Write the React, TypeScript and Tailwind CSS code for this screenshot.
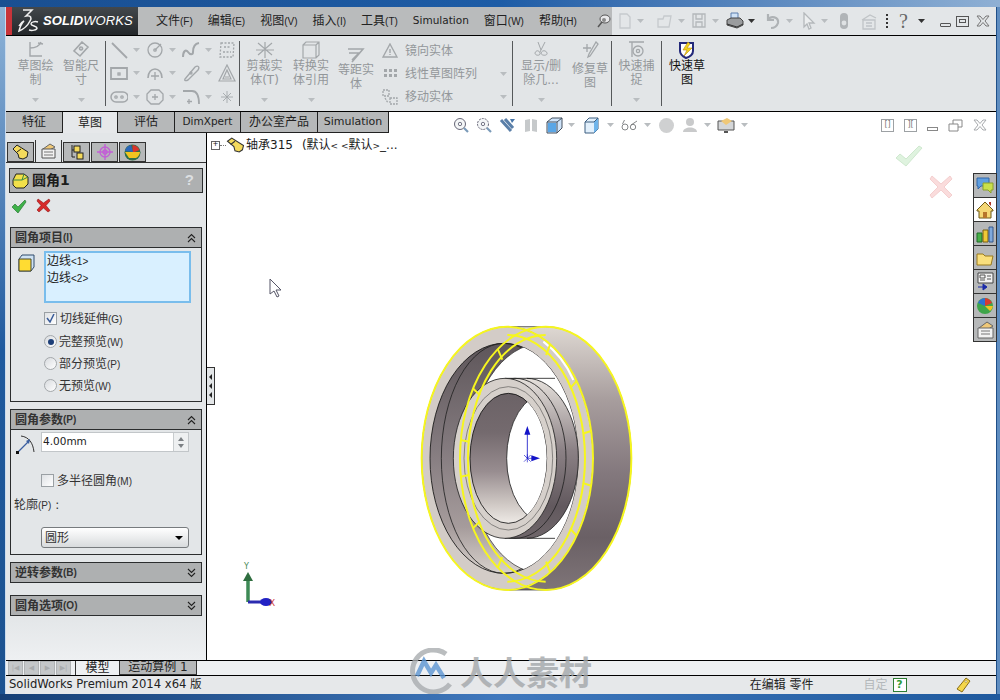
import type { ReactNode } from "react";

const UI = "font-['DejaVu_Sans','Noto_Sans_CJK_SC',sans-serif]";
const G = "#a3a7aa";

function Caret({ dark }: { dark?: boolean }) {
  return (
    <svg width="7" height="4" viewBox="0 0 7 4" className="shrink-0">
      <path d="M0 0h7L3.5 4z" fill={dark ? "#333" : "#b9bdc0"} />
    </svg>
  );
}

function Ico({ children, w = 18, h = 18 }: { children: ReactNode; w?: number; h?: number }) {
  return (
    <svg width={w} height={h} viewBox={`0 0 ${w} ${h}`} fill="none" stroke={G} strokeWidth="1.3" className="shrink-0">
      {children}
    </svg>
  );
}

// menu label: chinese text followed by a narrow shortcut
function Menu({ t, k }: { t: string; k: string }) {
  return (
    <span className="text-[12px] text-[#222] whitespace-nowrap">
      {t}
      <span className="text-[10px] font-['Liberation_Sans',sans-serif]">({k})</span>
    </span>
  );
}

function Logo() {
  return (
    <div className="w-[132px] h-full flex items-center bg-gradient-to-b from-[#43484c] to-[#23272a]">
      <div className="w-[6px] h-full bg-[#c8343a]" />
      <svg width="24" height="26" viewBox="0 0 24 26" className="ml-[4px]" fill="none" stroke="#f0f0f0" strokeWidth="1.5">
        <path d="M7 2h9l-6 6c5-1 6 2 4 5-2 4-6 8-11 10 1-4 3-8 5-10-2 1-4 3-5 5" />
        <path d="M22 14c-3-1-7 0-7 2s6 2 6 4-5 3-8 2" />
      </svg>
      <span className="ml-[3px] text-[13px] italic text-white tracking-[0.1px] font-['Liberation_Sans',sans-serif]">
        <b>SOLID</b>WORKS
      </span>
    </div>
  );
}

function TitleRow() {
  return (
    <div className="h-[29px] flex border-b border-black shrink-0">
      <Logo />
      <div className="w-[474px] h-full flex items-center bg-[#b9bbbc] pl-[18px] gap-[15px]">
        <Menu t="文件" k="F" />
        <Menu t="编辑" k="E" />
        <Menu t="视图" k="V" />
        <Menu t="插入" k="I" />
        <Menu t="工具" k="T" />
        <span className="text-[10.5px] text-[#222]">Simulation</span>
        <Menu t="窗口" k="W" />
        <Menu t="帮助" k="H" />
        <svg width="16" height="16" viewBox="0 0 16 16" className="ml-[3px] shrink-0">
          <path d="M3 14l4-5" stroke="#555" strokeWidth="1.5" />
          <ellipse cx="10" cy="6" rx="5" ry="4" fill="#e8e8ea" stroke="#555" />
          <circle cx="9" cy="7" r="2" fill="#888" />
        </svg>
      </div>
      <div className="flex-1 h-full flex items-center bg-[#e3e6e8] pl-[5px]">
        <Ico w={16}><path d="M3 2h7l3 3v11H3z" stroke="#c6cacd" /></Ico>
        <span className="ml-[4px] mr-[12px]"><Caret /></span>
        <Ico w={18}><path d="M2 7h5l1-3h7l-2 11H2z" stroke="#c6cacd" /></Ico>
        <span className="ml-[4px] mr-[6px]"><Caret /></span>
        <Ico w={16}><path d="M2 2h12v13H2zM5 2v5h6V2M5 15v-5h6v5" stroke="#b4b8bb" /></Ico>
        <span className="ml-[5px] mr-[7px]"><Caret /></span>
        <svg width="18" height="18" viewBox="0 0 18 18" className="shrink-0">
          <path d="M5 1h7v6H5z" fill="#cfe2f7" stroke="#5c7fae" />
          <path d="M1 8l4-2h9l3 3v4l-6 3-10-3z" fill="#9a9c9e" stroke="#444" />
          <path d="M1 12l10 3 6-3" stroke="#333" fill="none" />
        </svg>
        <span className="ml-[4px] mr-[8px]"><Caret dark /></span>
        <Ico w={18}><path d="M5 2v6h6M5 8c3-5 11-3 10 3-1 3-4 5-7 5" stroke="#aeb2b5" strokeWidth="2.2" /></Ico>
        <span className="ml-[5px] mr-[9px]"><Caret /></span>
        <Ico w={14}><path d="M2 1l10 10H7l2 5-2 1-2-5-3 3z" stroke="#b4b8bb" fill="#eceeef" /></Ico>
        <span className="ml-[5px] mr-[11px]"><Caret /></span>
        <svg width="10" height="18" viewBox="0 0 10 18" className="shrink-0">
          <rect x="1" y="1" width="8" height="16" rx="4" fill="#b0b4b7" />
          <circle cx="5" cy="11" r="2.4" fill="#dfe2e4" />
        </svg>
        <span className="w-[11px] shrink-0" />
        <Ico w={18}>
          <path d="M2 8l8-5 6 3M3 8h12v9H3zM6 11h6M6 14h6" stroke="#c0c4c7" />
        </Ico>
        <span className="ml-[8px] mr-[11px] flex flex-col gap-[2px] shrink-0">
          <i className="block w-[2px] h-[2px] bg-[#333]" />
          <i className="block w-[2px] h-[2px] bg-[#333]" />
          <i className="block w-[2px] h-[2px] bg-[#333]" />
          <i className="block w-[2px] h-[2px] bg-[#333]" />
        </span>
        <span className="text-[20px] leading-none text-[#666] w-[14px] shrink-0 font-['Liberation_Serif',serif]">?</span>
        <span className="ml-[5px] mr-[15px]"><Caret dark /></span>
        <span className="w-[11px] h-[4px] mt-[8px] border border-[#555] rounded-[1px] shrink-0" />
        <span className="w-[13px] h-[11px] ml-[5px] border border-[#555] flex items-center justify-center shrink-0">
          <span className="block w-[7px] h-[4px] border border-[#555]" />
        </span>
        <svg width="14" height="12" viewBox="0 0 14 12" className="ml-[7px] shrink-0" fill="none" stroke="#777">
          <path d="M1 1h3l3 3.5L10 1h3L9 6l4 5h-3L7 7.5 4 11H1l4-5z" />
        </svg>
      </div>
    </div>
  );
}

function BigBtn({
  lines,
  icon,
  w,
  on,
  arrow = true,
  pad = 0,
}: {
  lines: string[];
  icon: ReactNode;
  w: number;
  on?: boolean;
  arrow?: boolean;
  pad?: number;
}) {
  return (
    <div className="h-full flex flex-col items-center pt-[5px] shrink-0" style={{ width: w }}>
      <div className="h-[18px] flex items-center justify-center">{icon}</div>
      <div
        className={`text-[12px] leading-[14px] text-center ${on ? "text-[#111]" : "text-[#93979a]"}`}
        style={{ marginTop: pad }}
      >
        {lines.map((l) => (
          <div key={l} className="whitespace-nowrap">{l}</div>
        ))}
      </div>
      {arrow && <div className="mt-auto mb-[9px]"><Caret /></div>}
    </div>
  );
}

function Sep() {
  return <div className="w-px h-[65px] bg-[#55585a] shrink-0 self-center" />;
}

function ToolGrid() {
  const cells: ReactNode[] = [
    <path d="M2 2l15 15" strokeWidth="1.8" />,
    <><circle cx="9" cy="9" r="7" /><circle cx="9" cy="9" r="1.2" /><path d="M9 9l6-6" /></>,
    <path d="M1 16c0-6 3-8 5-5s5 3 5 0 0-8 6-9" strokeWidth="2" />,
    <path d="M3 2h13l-1 14H2zM6 6h7M5 11h8" strokeDasharray="2 1.5" />,
    <><path d="M1 4h16v11H1z" strokeWidth="1.8" /><rect x="8" y="9" width="2" height="2" /></>,
    <><path d="M2 14c0-12 14-12 14 0" strokeWidth="1.6" /><path d="M9 8v8M5 12h8" /></>,
    <><path d="M3 15L13 3c3-2 5 0 3 3L6 16c-2 1-4 1-3-1z" strokeWidth="1.4" /><circle cx="9" cy="9" r="1" /></>,
    <path d="M9 1l8 16H1zM9 6l4 9H5zM7 13h4" strokeWidth="1.2" />,
    <><rect x="1" y="4" width="17" height="10" rx="5" strokeWidth="1.5" /><circle cx="6" cy="9" r="1.2" /><circle cx="12" cy="9" r="1.2" /></>,
    <><path d="M5 2h8l4 4v6l-4 4H5l-4-4V6z" strokeWidth="1.3" /><path d="M9 6v6M6 9h6" /></>,
    <><path d="M1 3h9c5 0 7 4 7 13" strokeWidth="1.8" /><path d="M7 11v5M5 13.500h5" /></>,
    <path d="M9 3v12M3 9h12M5 5l8 8M13 5l-8 8" strokeWidth=".9" />,
  ];
  return (
    <div className="w-[133px] h-full grid grid-cols-[36px_36px_36px_18px] grid-rows-3 pl-[4px] py-[2px] shrink-0">
      {cells.map((c, i) => (
        <div key={i} className="flex items-center gap-[5px]">
          <Ico w={18}>{c}</Ico>
          {(i + 1) % 4 !== 0 && <Caret />}
        </div>
      ))}
    </div>
  );
}

function Ribbon() {
  const rows: [string, ReactNode, boolean][] = [
    ["镜向实体", <path d="M8 1l7 13H1zM8 6v4M8 11v1" strokeWidth="1.4" />, false],
    [
      "线性草图阵列",
      <path d="M2 3h3v3H2zM7 3h3v3H7zM12 3h3v3h-3zM2 8h3v3H2zM7 8h3v3H7zM12 8h3v3h-3z" fill={G} stroke="none" />,
      true,
    ],
    ["移动实体", <path d="M1 1h6v6H1zM8 9h7v6H8zM3 9l3 5" strokeDasharray="2 1" />, true],
  ];
  return (
    <div className="h-[76px] flex items-stretch bg-[#e2e5e7] border-b border-black shrink-0">
      <div className="w-[8px] shrink-0" />
      <BigBtn
        w={43}
        lines={["草图绘", "制"]}
        icon={<Ico w={22}><path d="M5 1v14h12M5 7c4 0 9-1 11-6M13 2l5 1" strokeWidth="1.4" /></Ico>}
      />
      <BigBtn
        w={48}
        lines={["智能尺", "寸"]}
        icon={<Ico w={18}><path d="M10 1l6 5-8 9-6-5zM9 6a1.500 1.500 0 1 0 .1 0" strokeWidth="1.6" /></Ico>}
      />
      <Sep />
      <ToolGrid />
      <Sep />
      <BigBtn
        w={49}
        lines={["剪裁实", "体(T)"]}
        icon={<Ico w={20}><path d="M3 2l7 6 7-6M3 14l7-6 7 6M1 9h18M10 1v16" strokeWidth="1.2" /></Ico>}
      />
      <BigBtn
        w={44}
        lines={["转换实", "体引用"]}
        icon={<Ico w={18}><path d="M1 4l3-3h13v13l-3 3H1zM4 4h10v13M14 4l3-3M4 4L1 4" strokeWidth="1.2" /></Ico>}
      />
      <BigBtn
        w={46}
        pad={4}
        arrow={false}
        lines={["等距实", "体"]}
        icon={<span className="mt-[8px]"><Ico w={20}><path d="M2 4h15L6 17M3 8h10L6 15" strokeWidth="1.6" /></Ico></span>}
      />
      <div className="w-[133px] h-full flex flex-col justify-between py-[4px] pl-[3px] shrink-0">
        {rows.map(([t, ic, arrow]) => (
          <div key={t} className="h-[21px] flex items-center">
            <Ico w={16} h={16}>{ic}</Ico>
            <span className="ml-[7px] text-[12px] text-[#93979a] whitespace-nowrap">{t}</span>
            {arrow && <span className="ml-auto mr-[5px]"><Caret /></span>}
          </div>
        ))}
      </div>
      <Sep />
      <BigBtn
        w={56}
        lines={["显示/删", "除几..."]}
        icon={<Ico w={16}><path d="M5 1l3 8M12 1L7 11M2 12c1-3 4-3 5 0s-5 3-5 0zM8 12c1-3 5-3 6 0s-6 3-6 0z" strokeWidth="1" /></Ico>}
      />
      <BigBtn
        w={42}
        arrow={false}
        pad={3}
        lines={["修复草", "图"]}
        icon={<Ico w={18}><path d="M2 7h8M6 3v8M15 1l2 2-8 12-2 1 1-3z" strokeWidth="1.3" /></Ico>}
      />
      <Sep />
      <BigBtn
        w={49}
        lines={["快速捕", "捉"]}
        icon={<Ico w={18}><path d="M1 1h15M4 1v15" /><circle cx="10" cy="10" r="5" /><circle cx="10" cy="10" r="1.600" /></Ico>}
      />
      <Sep />
      <BigBtn
        w={50}
        on
        arrow={false}
        lines={["快速草", "图"]}
        icon={
          <svg width="18" height="18" viewBox="0 0 18 18">
            <path d="M2 2v8c0 4 4 6 6 7 3-1 7-3 7-7V2z" fill="#fff" stroke="#23297a" strokeWidth="2" />
            <path d="M10 1L5 9h4l-3 6 8-8H9l3-4z" fill="#f2d21e" stroke="#b58a10" strokeWidth=".6" />
          </svg>
        }
      />
    </div>
  );
}

function Tab({ t, active, w, small }: { t: string; active?: boolean; w: number; small?: string }) {
  return (
    <div
      className={`h-full flex items-center justify-center text-[12px] text-[#222] border-r border-[#222] shrink-0 ${
        active ? "bg-[#e6e8ea] h-[23px] self-start" : "bg-[#b6b8b9] border-b"
      }`}
      style={{ width: w }}
    >
      <span className={small}>{t}</span>
    </div>
  );
}

function Mag({ dash }: { dash?: boolean }) {
  return (
    <svg width="16" height="17" viewBox="0 0 16 17" fill="none" className="shrink-0">
      <circle cx="7" cy="7" r="5.500" fill="#f4f6f7" stroke="#667" strokeDasharray={dash ? "2 1" : undefined} />
      <circle cx="7" cy="7" r="1.700" stroke="#778" />
      <path d="M11 11l4 4" stroke="#7a9ab8" strokeWidth="2.200" />
    </svg>
  );
}

function ViewBar() {
  return (
    <div className="flex-1 flex items-center pl-[64px] pt-[5px] bg-white">
      <Mag />
      <span className="w-[7px]" />
      <Mag dash />
      <span className="w-[7px]" />
      <svg width="17" height="17" viewBox="0 0 17 17"><path d="M2 3l10 11M6 2l8 9" stroke="#5a7fa8" strokeWidth="3" /><path d="M11 2h5l-3 4" fill="#4775a8" /></svg>
      <span className="w-[7px]" />
      <svg width="16" height="16" viewBox="0 0 16 16"><path d="M2 3l5-1v12l-5 1zM9 2l5 1v12l-5-1z" fill="#c6c9cb" /></svg>
      <span className="w-[7px]" />
      <svg width="17" height="17" viewBox="0 0 17 17">
        <path d="M1 5l5-4h10v10l-5 5H1z" fill="#cfe4fa" stroke="#44515e" />
        <path d="M1 5h10v11M11 5l5-4" stroke="#44515e" fill="none" />
        <path d="M2 6h8v9H2z" fill="#5aa6e6" />
      </svg>
      <span className="w-[5px]" />
      <Caret />
      <span className="w-[9px]" />
      <svg width="16" height="17" viewBox="0 0 16 17">
        <path d="M1 5l4-4h9v11l-4 4H1z" fill="#e2f0fc" stroke="#3d5e80" />
        <path d="M10 5v11L14 12V1z" fill="#6fb4ea" />
        <path d="M1 5h9l4-4" stroke="#3d5e80" fill="none" />
      </svg>
      <span className="w-[7px]" />
      <Caret />
      <span className="w-[6px]" />
      <svg width="19" height="12" viewBox="0 0 19 12" fill="none" stroke="#77797c" strokeWidth=".9">
        <circle cx="5" cy="8" r="3" /><circle cx="13" cy="8" r="2.700" /><path d="M2.500 5l2-4M11 6l6-4" />
      </svg>
      <span className="w-[5px]" />
      <Caret />
      <span className="w-[8px]" />
      <span className="w-[15px] h-[15px] rounded-full bg-[#cfd0d1]" />
      <span className="w-[8px]" />
      <svg width="16" height="16" viewBox="0 0 16 16"><circle cx="8" cy="5" r="4" fill="#c9cacb" /><path d="M1 15c0-6 14-6 14 0z" fill="#c9cacb" /></svg>
      <span className="w-[6px]" />
      <Caret />
      <span className="w-[6px]" />
      <svg width="18" height="18" viewBox="0 0 18 18">
        <path d="M1 5h16v9H1z" fill="#d4d6d8" stroke="#555" />
        <path d="M4 5l6-3 5 3-6 4z" fill="#efc878" />
        <path d="M7 16h4" stroke="#555" strokeWidth="2" />
      </svg>
      <span className="w-[6px]" />
      <Caret />
      <div className="ml-auto flex items-center pr-[9px] gap-[10px]">
        <span className="w-[13px] h-[13px] border border-[#9da1a4] flex items-center justify-center text-[8px] leading-none text-[#777]">[]</span>
        <span className="w-[13px] h-[13px] border border-[#9da1a4] flex items-center justify-center text-[8px] leading-none text-[#777]">][</span>
        <span className="w-[11px] h-[4px] mt-[7px] border border-[#888]" />
        <svg width="15" height="13" viewBox="0 0 15 13" fill="#fff" stroke="#888"><path d="M5 1h9v7H5z" /><path d="M1 5h9v7H1z" /></svg>
        <svg width="14" height="12" viewBox="0 0 14 12" fill="none" stroke="#a7aaad"><path d="M1 1h3l3 3.5L10 1h3L9 6l4 5h-3L7 7.5 4 11H1l4-5z" /></svg>
      </div>
    </div>
  );
}

function PanelTab({ active, children }: { active?: boolean; children: ReactNode }) {
  return (
    <div
      className={`w-[27px] flex items-center justify-center border border-[#333] shrink-0 ${
        active ? "h-[22px] bg-[#e3e6e8] border-b-0 border-t-0" : "h-[20px] bg-[#b6b8b9]"
      }`}
    >
      {children}
    </div>
  );
}

function Section({ title, k, open, children }: { title: string; k: string; open?: boolean; children?: ReactNode }) {
  return (
    <div className="mx-[4px] border border-[#2b2d2e]">
      <div className="h-[19px] flex items-center bg-[#aeb0b1] pl-[4px] pr-[4px] text-[12px] font-bold text-[#333]">
        {title}
        <span className="text-[10px] font-['Liberation_Sans',sans-serif]">({k})</span>
        <svg width="9" height="10" viewBox="0 0 9 10" className="ml-auto mr-[1px]" fill="none" stroke="#222" strokeWidth="1.1">
          {open ? <path d="M1 5l3.500-3.500L8 5M1 9l3.500-3.500L8 9" /> : <path d="M1 1l3.500 3.500L8 1M1 5l3.500 3.500L8 5" />}
        </svg>
      </div>
      {children && <div className="border-t border-[#2b2d2e]">{children}</div>}
    </div>
  );
}

function Check({ on }: { on?: boolean }) {
  return (
    <span className="w-[13px] h-[13px] border border-[#9aa0a4] bg-gradient-to-br from-[#dfe2e5] to-white flex items-center justify-center shrink-0">
      {on && (
        <svg width="9" height="9" viewBox="0 0 9 9" fill="none" stroke="#3a5d9a" strokeWidth="1.500"><path d="M1 4l3 4 4-8" /></svg>
      )}
    </span>
  );
}

function Radio({ t, k, on }: { t: string; k: string; on?: boolean }) {
  return (
    <div className="flex items-center">
      <span className="w-[13px] h-[13px] rounded-full border border-[#a4a8ab] bg-gradient-to-br from-[#d8dbde] to-white flex items-center justify-center shrink-0">
        {on && <span className="w-[6px] h-[6px] rounded-full bg-[#1d3f78]" />}
      </span>
      <span className="ml-[2px] text-[12px] leading-none text-[#333]">
        {t}
        <span className="text-[10px] font-['Liberation_Sans',sans-serif]">({k})</span>
      </span>
    </div>
  );
}

function Panel() {
  return (
    <div className="w-[201px] shrink-0 bg-[#e3e6e8] border-r border-black flex flex-col">
      <div className="h-[30px] flex items-end pl-px border-b border-[#333] gap-px shrink-0">
        <PanelTab>
          <svg width="17" height="16" viewBox="0 0 17 16"><path d="M1 5l4-4 11 7-1 5-4 2-4-1-1-4z" fill="#f4da5c" stroke="#222" /><path d="M5 8l4-3" stroke="#222" /></svg>
        </PanelTab>
        <PanelTab active>
          <svg width="17" height="16" viewBox="0 0 17 16"><path d="M3 6l7-5 5 3-7 4z" fill="#efc878" stroke="#666" /><path d="M2 6h13v9H2z" fill="#f2f2f2" stroke="#555" /><path d="M4 9h9M4 12h9" stroke="#777" /></svg>
        </PanelTab>
        <PanelTab>
          <svg width="17" height="16" viewBox="0 0 17 16"><path d="M4 1v12h3M4 6h3" stroke="#222" fill="none" /><rect x="6" y="2" width="6" height="6" fill="#f4da5c" stroke="#222" /><rect x="9" y="9" width="6" height="6" fill="#f4da5c" stroke="#222" /></svg>
        </PanelTab>
        <PanelTab>
          <svg width="16" height="16" viewBox="0 0 16 16" fill="none" stroke="#c25fd6" strokeWidth="1.400"><circle cx="8" cy="8" r="5" /><circle cx="8" cy="8" r="2" /><path d="M8 0v16M0 8h16" /></svg>
        </PanelTab>
        <PanelTab>
          <svg width="17" height="17" viewBox="0 0 17 17"><circle cx="8.500" cy="8.500" r="8" fill="#2f6f4b" /><path d="M8.500 1a8 8 0 0 1 7 5L8.500 9z" fill="#d8342c" /><path d="M1 8h15a8 8 0 0 1-4 6H5z" fill="#f0c420" /><path d="M1 7a8 8 0 0 1 6-6l2 7z" fill="#2a66b8" /></svg>
        </PanelTab>
      </div>

      <div className="mx-[3px] mt-[5px] h-[25px] bg-[#aeb0b1] border border-[#2b2d2e] flex items-center pl-[2px] pr-[8px]">
        <svg width="17" height="17" viewBox="0 0 17 17"><path d="M1 8l3-6h8l4 3v7l-4 4H4l-3-3z" fill="#f2e04a" stroke="#222" /><path d="M1 8h9l2-6M10 8l6-3" stroke="#3c8a44" fill="none" /></svg>
        <span className="ml-[3px] text-[14px] font-bold text-[#1c1c1c]">圆角1</span>
        <span className="ml-auto text-[15px] font-bold text-[#dcdfe1] font-['Liberation_Sans',sans-serif]">?</span>
      </div>

      <div className="flex items-center h-[17px] mt-[4px] pl-[5px] gap-[9px]">
        <svg width="16" height="16" viewBox="0 0 16 16"><path d="M1 9l3-3 3 3 7-7 1 2-8 11z" fill="#3fb24a" stroke="#1c6a27" strokeWidth=".6" /></svg>
        <svg width="15" height="15" viewBox="0 0 15 15"><path d="M2 1l5.500 4L13 1l1 2-4 4.500 4 5-2 1.500-4.500-4L3 14l-2-2 4-4.500L1 3z" fill="#d72a2a" stroke="#8d1414" strokeWidth=".6" /></svg>
      </div>

      <div className="mt-[13px]">
        <Section title="圆角项目" k="I" open>
          <div className="h-[153px] relative pl-[33px] pt-[3px]">
            <div className="w-[147px] h-[52px] border-2 border-[#79bdec] bg-[#d9f0ff] pl-px text-[12px] leading-[16px] text-[#222]">
              边线<span className="text-[10px] font-['Liberation_Sans',sans-serif]">&lt;1&gt;</span>
              <br />
              边线<span className="text-[10px] font-['Liberation_Sans',sans-serif]">&lt;2&gt;</span>
            </div>
            <svg width="17" height="18" viewBox="0 0 17 18" className="absolute left-[7px] top-[6px]">
              <path d="M1 5l3-4h12v12l-3 4H1z" fill="#cfe2f3" stroke="#2f4a6b" />
              <path d="M1 5h12v12H1z" fill="#ffdc32" stroke="#4a4a2a" />
            </svg>
            <div className="flex items-center mt-[8px] h-[15px]">
              <Check on />
              <span className="ml-[3px] text-[12px] text-[#333]">
                切线延伸<span className="text-[10px] font-['Liberation_Sans',sans-serif]">(G)</span>
              </span>
            </div>
            <div className="mt-[9px] flex flex-col gap-[9px]">
              <Radio t="完整预览" k="W" on />
              <Radio t="部分预览" k="P" />
              <Radio t="无预览" k="W" />
            </div>
          </div>
        </Section>
      </div>

      <div className="mt-[7px]">
        <Section title="圆角参数" k="P" open>
          <div className="h-[124px] relative pt-[2px] pl-[30px]">
            <svg width="20" height="20" viewBox="0 0 20 20" className="absolute left-[5px] top-[5px]" fill="none">
              <path d="M5 1c8 1 12 7 13 16" stroke="#333" />
              <path d="M2 17L13 6" stroke="#3a5fa0" strokeWidth="1.300" />
              <path d="M14 4l-1 5-3-3z" fill="#3a5fa0" />
              <rect x="0" y="16" width="3" height="3" fill="#111" />
            </svg>
            <div className="w-[148px] h-[20px] bg-white border border-[#c2c6c9] flex items-center">
              <span className="pl-px text-[10.5px] text-[#222]">4.00mm</span>
              <div className="ml-auto w-[15px] h-full border-l border-[#c8ccce] flex flex-col items-center justify-around py-[2px] bg-[#eef0f1]">
                <span className="w-0 h-0 border-x-[3px] border-x-transparent border-b-[4px] border-b-[#7c8084]" />
                <span className="w-0 h-0 border-x-[3px] border-x-transparent border-t-[4px] border-t-[#7c8084]" />
              </div>
            </div>
            <div className="flex items-center mt-[21px] h-[15px]">
              <Check />
              <span className="ml-[3px] text-[12px] text-[#333]">
                多半径圆角<span className="text-[10px] font-['Liberation_Sans',sans-serif]">(M)</span>
              </span>
            </div>
            <div className="absolute left-[3px] top-[69px] text-[12px] leading-none text-[#333]">
              轮廓<span className="text-[10px] font-['Liberation_Sans',sans-serif]">(P)</span> :
            </div>
            <div className="absolute left-[30px] top-[97px] w-[148px] h-[21px] rounded-[3px] border border-[#777b7e] bg-gradient-to-b from-white to-[#d8dbdd] flex items-center pl-[3px] pr-[5px] text-[12px] text-[#333]">
              圆形
              <span className="ml-auto w-0 h-0 border-x-[4px] border-x-transparent border-t-[4px] border-t-black" />
            </div>
          </div>
        </Section>
      </div>

      <div className="mt-[7px]"><Section title="逆转参数" k="B" /></div>
      <div className="mt-[12px]"><Section title="圆角选项" k="O" /></div>
      <div className="flex-1 bg-gradient-to-b from-[#e3e6e8] to-[#eef0f2]" />
    </div>
  );
}

function Bearing() {
  // viewBox is 3x the screen size so the coordinates come straight from the zoomed reference
  const a = { cx: 322, cy: 445, rx: 257, ry: 395 };
  const b = { cx: 437, cy: 445, rx: 257, ry: 395 };
  const ticks = (c: typeof a, ang: number[]) =>
    ang.map((d) => {
      const t = (d * Math.PI) / 180;
      const k = 0.905;
      return (
        <line
          key={`${c.cx}-${d}`}
          x1={c.cx + c.rx * Math.cos(t)}
          y1={c.cy + c.ry * Math.sin(t)}
          x2={c.cx + c.rx * k * Math.cos(t)}
          y2={c.cy + c.ry * k * Math.sin(t)}
          stroke="#f6f61e"
          strokeWidth="6"
        />
      );
    });
  return (
    <svg width="250" height="290" viewBox="0 0 750 870">
      <defs>
        <linearGradient id="band" x1="0" y1="0" x2="0" y2="1">
          <stop offset="0" stopColor="#ded8d2" />
          <stop offset="0.28" stopColor="#a79d9d" />
          <stop offset="0.55" stopColor="#84797e" />
          <stop offset="0.8" stopColor="#6a6065" />
          <stop offset="1" stopColor="#7f7578" />
        </linearGradient>
        <linearGradient id="bore" x1="0" y1="0" x2="0" y2="1">
          <stop offset="0" stopColor="#6b6266" />
          <stop offset="0.3" stopColor="#746a6e" />
          <stop offset="0.6" stopColor="#988d90" />
          <stop offset="0.85" stopColor="#cfc8c4" />
          <stop offset="1" stopColor="#eeeae6" />
        </linearGradient>
        <linearGradient id="wall" x1="0" y1="0" x2="0" y2="1">
          <stop offset="0" stopColor="#5e565a" />
          <stop offset="0.45" stopColor="#837a7e" />
          <stop offset="0.8" stopColor="#a69c9c" />
          <stop offset="1" stopColor="#d8d2cc" />
        </linearGradient>
        <linearGradient id="hub" x1="0" y1="0" x2="0" y2="1">
          <stop offset="0" stopColor="#e6e1dc" />
          <stop offset="0.45" stopColor="#8b8185" />
          <stop offset="0.8" stopColor="#62595e" />
          <stop offset="1" stopColor="#6f666a" />
        </linearGradient>
        <clipPath id="holeC"><ellipse cx="312" cy="445" rx="222" ry="345" /></clipPath>
        <clipPath id="boreC"><ellipse cx="325" cy="445" rx="115" ry="195" /></clipPath>
      </defs>

      {/* outer cylinder */}
      <path d={`M${a.cx} 50H${b.cx}A257 395 0 0 1 ${b.cx} 840H${a.cx}z`} fill="url(#band)" stroke="#222" strokeWidth="2" />
      {/* front face */}
      <ellipse {...a} fill="#d3ccc7" stroke="#222" strokeWidth="2" />
      {/* bore of the outer ring */}
      <ellipse cx="312" cy="445" rx="222" ry="345" fill="url(#wall)" stroke="#111" strokeWidth="2.500" />
      <ellipse cx="312" cy="445" rx="188" ry="345" fill="none" stroke="#222" strokeWidth="2.500" />
      <g clipPath="url(#holeC)">
        <ellipse cx="427" cy="445" rx="222" ry="345" fill="#fff" stroke="#222" strokeWidth="2" />
      </g>
      {/* inner ring */}
      <path d="M315 205H380A155 240 0 0 1 380 685H315z" fill="url(#hub)" stroke="#222" strokeWidth="2.500" />
      <ellipse cx="345" cy="445" rx="153" ry="240" fill="none" stroke="#222" strokeWidth="2.500" />
      <path d="M380 205H465M380 685H465" stroke="#222" strokeWidth="2.500" />
      <ellipse cx="315" cy="445" rx="155" ry="240" fill="#d6d0cb" stroke="#222" strokeWidth="2.500" />
      <ellipse cx="325" cy="445" rx="115" ry="195" fill="url(#bore)" stroke="#111" strokeWidth="2.500" />
      <ellipse cx="325" cy="445" rx="133" ry="215" fill="none" stroke="#333" strokeWidth="1.500" />
      <g clipPath="url(#boreC)">
        <ellipse cx="440" cy="445" rx="120" ry="195" fill="#fff" stroke="#222" strokeWidth="2.500" />
      </g>

      {/* selected edges */}
      <g fill="none" stroke="#f6f61e" strokeWidth="6">
        <ellipse {...a} />
        <ellipse {...b} />
        <path d="M322 75A233 370 0 0 1 322 815" />
        <path d="M437 75A233 370 0 0 0 437 815" />
      </g>
      <path d="M430 95Q490 140 520 210" fill="none" stroke="#fff" strokeWidth="6" />
      {ticks(a, [-60, -36, -12, 12, 36, 60])}
      {ticks(b, [236, 212, 188, 172, 148, 124])}

      {/* origin */}
      <path d="M382 445V370" stroke="#1414c8" strokeWidth="2.500" />
      <path d="M382 348l9 26h-18zM420 445l-26-9v18z" fill="#1414c8" />
      <path d="M382 445h20M372 435l20 20M392 435l-20 20M382 433v24" stroke="#1414c8" strokeWidth="2" />
    </svg>
  );
}

function TaskPane() {
  const tabs: ReactNode[] = [
    <><path d="M1 2h12v8H5l-3 3v-3H1z" fill="#5f9fe0" stroke="#3366a8" /><path d="M7 7h10v7h-2v3l-3-3H7z" fill="#c9e04a" stroke="#8ba02a" /></>,
    <><path d="M1 10L9 2l8 8v1h-2v7H3v-7H1z" fill="#f5d774" stroke="#6e5a18" /><path d="M7 18v-6h4v6z" fill="#b7752a" /><path d="M13 2h2v4l-2-2z" fill="#b03a2a" /></>,
    <><path d="M1 9h5v9H1z" fill="#48b048" stroke="#1f6a27" /><path d="M7 6h5v12H7z" fill="#efc838" stroke="#7a5f10" /><path d="M13 3h4v15h-4z" fill="#7fa9dc" stroke="#34568a" /></>,
    <path d="M1 6h6l2 2h8l-2 9H1z" fill="#f9df7d" stroke="#9a7a1e" />,
    <><path d="M2 1h15v10H2z" fill="#f2f2f2" stroke="#444" /><path d="M4 3h5v3H4zM11 4h4M11 7h4M4 8h5" stroke="#555" fill="none" /><path d="M2 15h8M7 12l4 3-4 3z" stroke="#1a2aa8" fill="#1a2aa8" /></>,
    <><circle cx="9" cy="10" r="8" fill="#3fa54a" /><path d="M9 2a8 8 0 0 1 7 5L9 10z" fill="#d83a30" /><path d="M9 2a8 8 0 0 0-7 5l7 3z" fill="#2f6fd0" /><path d="M1 10h16a8 8 0 0 1-3 5L9 10z" fill="#f0c420" /></>,
    <><path d="M3 8l8-6 6 4-6 4z" fill="#efc878" stroke="#666" /><path d="M2 8h15v10H2z" fill="#f2f2f2" stroke="#666" /><path d="M5 11h9M5 14h9" stroke="#777" /></>,
  ];
  return (
    <div className="absolute right-[-1px] top-[40px] flex flex-col z-10">
      {tabs.map((t, i) => (
        <div
          key={i}
          className={`w-[24px] h-[25px] flex items-center justify-center border border-[#333] -mb-px ${
            i === 1 ? "bg-white" : "bg-[#b6b8b9]"
          }`}
        >
          <svg width="18" height="19" viewBox="0 0 18 19">{t}</svg>
        </div>
      ))}
    </div>
  );
}

function Canvas() {
  return (
    <div className="flex-1 bg-white relative overflow-visible">
      {/* panel splitter handle */}
      <div className="absolute left-0 top-[234px] w-[8px] h-[38px] bg-[#e3e6e8] border border-l-0 border-[#333] flex flex-col items-center justify-center gap-[3px] z-10">
        <span className="w-0 h-0 border-y-[3px] border-y-transparent border-r-[3px] border-r-[#222]" />
        <span className="w-0 h-0 border-y-[3px] border-y-transparent border-r-[3px] border-r-[#222]" />
        <span className="w-0 h-0 border-y-[3px] border-y-transparent border-r-[3px] border-r-[#222]" />
      </div>

      {/* feature tree flyout */}
      <div className="absolute left-[4px] top-[4px] flex items-center text-[12px] leading-none text-[#1c1c1c] whitespace-nowrap">
        <span className="w-[9px] h-[9px] border border-[#666] flex items-center justify-center text-[9px] leading-none font-['Liberation_Mono',monospace]">+</span>
        <span className="w-[6px] border-t border-dotted border-[#777]" />
        <svg width="19" height="16" viewBox="0 0 17 15"><path d="M1 4l4-3 11 7-1 4-3 2-4-1-1-4z" fill="#f4da5c" stroke="#333" /><path d="M4 7l4-3" stroke="#333" /></svg>
        <span className="ml-[1px]">轴承315</span>
        <span className="ml-[9px]">
          (默认<span className="text-[9px]">&lt; &lt;</span>默认<span className="text-[9px]">&gt;</span>_...
        </span>
      </div>

      {/* confirmation corner */}
      <svg width="28" height="22" viewBox="0 0 28 22" className="absolute left-[688px] top-[12px]">
        <path d="M1 13l4-4 6 5L24 1l3 2L11 21z" fill="#dff3df" stroke="#cfe8cf" />
      </svg>
      <svg width="24" height="24" viewBox="0 0 24 24" className="absolute left-[722px] top-[42px]">
        <path d="M3 1l9 8 9-8 2 3-8 8 8 8-3 3-8-8-9 8-2-3 8-8-8-8z" fill="#fadcdc" stroke="#f4cfcf" />
      </svg>

      {/* mouse pointer */}
      <svg width="14" height="20" viewBox="0 0 14 20" className="absolute left-[62px] top-[145px]">
        <path d="M1 1v15l4-3 3 6 2-1-3-6h5z" fill="#fff" stroke="#556" />
      </svg>

      <div className="absolute left-[193px] top-[177px]"><Bearing /></div>

      {/* triad */}
      <svg width="36" height="50" viewBox="0 0 36 50" className="absolute left-[36px] top-[425px]">
        <path d="M5 20v24" stroke="#3d8a55" strokeWidth="3.500" />
        <path d="M5 14l5 9H0z" fill="#2f6e3f" />
        <path d="M5 44h20" stroke="#2b2bb0" strokeWidth="3" />
        <ellipse cx="23" cy="44" rx="6" ry="4" fill="#2222c4" />
        <text x="1" y="11" fontSize="8" fill="#3f8a55" fontFamily="DejaVu Sans">Y</text>
        <text x="26" y="48" fontSize="9" fill="#d04040" fontFamily="DejaVu Sans">X</text>
      </svg>

      <TaskPane />
    </div>
  );
}

function BottomTabs() {
  return (
    <div className="h-[15px] flex bg-[#eef0f2] border-t border-black shrink-0">
      <div className="flex pl-[2px] gap-px">
        {["|◀", "◀", "▶", "▶|"].map((s) => (
          <span key={s} className="w-[15px] h-[14px] bg-[#c4c7c9] border border-[#b0b3b5] text-[7px] leading-[12px] text-center text-[#a9acae]">{s}</span>
        ))}
      </div>
      <div className="ml-[4px] w-[45px] h-[15px] bg-[#eef0f2] border-x border-[#333] text-[12px] leading-[14px] text-center text-[#222]">模型</div>
      <div className="w-[77px] h-[14px] bg-[#b6b8b9] border-r border-b border-[#333] text-[12px] leading-[13px] text-center text-[#222]">
        运动算例 1
      </div>
    </div>
  );
}

function StatusBar() {
  return (
    <div className="h-[19px] flex items-center bg-[#e6e8ea] border-t border-black text-[12px] text-[#222] shrink-0 pl-[3px]">
      <span className="text-[11.6px]">SolidWorks Premium 2014 x64 版</span>
      <span className="ml-[548px]">在编辑 零件</span>
      <span className="ml-[50px] text-[#b4b8bb]">自定</span>
      <span className="ml-[5px] w-[14px] h-[14px] bg-white border border-[#2f7d34] text-[11px] leading-[12px] text-center font-bold text-[#2f9d3a]">?</span>
      <svg width="16" height="16" viewBox="0 0 16 16" className="ml-[48px]">
        <path d="M11 1l4 3-8 11-5-3z" fill="#f4d64a" stroke="#8a6d14" />
        <circle cx="11" cy="4.500" r="1" fill="#fff" stroke="#8a6d14" strokeWidth=".5" />
      </svg>
    </div>
  );
}

export default function App() {
  return (
    <div className={`w-[1000px] h-[700px] flex flex-col relative overflow-hidden bg-[#1f5a9e] ${UI}`}>
      <div className="h-[7px] shrink-0 bg-gradient-to-r from-[#1a4f91] via-[#1d5ca6] to-[#8fb0d4]" />
      <div className="flex-1 min-h-0 flex">
        <div className="w-[6px] shrink-0 bg-gradient-to-b from-[#8fb4d8] via-[#1f5a9e] to-[#1c5290] border-r border-[#c9dbee]" />
        <div className="flex-1 min-w-0 flex flex-col">
          <TitleRow />
          <Ribbon />
          <div className="h-[21px] flex shrink-0 relative z-10">
            <div className="flex h-[21px]">
              <Tab t="特征" w={57} />
              <Tab t="草图" active w={55} />
              <Tab t="评估" w={57} />
              <Tab t="DimXpert" w={66} small="text-[10.5px]" />
              <Tab t="办公室产品" w={77} />
              <Tab t="Simulation" w={71} small="text-[11px]" />
            </div>
            <ViewBar />
          </div>
          <div className="flex-1 min-h-0 flex">
            <Panel />
            <Canvas />
          </div>
          <BottomTabs />
          <StatusBar />
        </div>
        <div className="w-[4px] shrink-0 bg-[#5f8dc0] border-l border-[#1f4f88]" />
      </div>
      <div className="h-[6px] shrink-0 bg-gradient-to-r from-[#163f75] via-[#3f78bd] to-[#1f5a9e]" />

      {/* watermark */}
      <div className="absolute left-[410px] top-[648px] flex items-center pointer-events-none opacity-80">
        <svg width="46" height="46" viewBox="0 0 46 46" fill="none">
          <path d="M36 6A21 21 0 1 0 40 36" stroke="#a9adb0" strokeWidth="5" />
          <path d="M7 28l7-15 7 12 5-8 8 13" stroke="#5c95d2" strokeWidth="4.500" />
        </svg>
        <span className="ml-[4px] text-[33px] leading-none font-bold text-[#a3a7aa] font-['Noto_Sans_CJK_SC',sans-serif]">人人素材</span>
      </div>
    </div>
  );
}
